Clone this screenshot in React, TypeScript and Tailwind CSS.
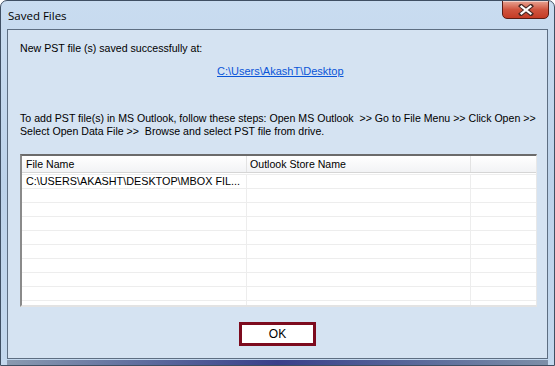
import React from "react";

const rows = Array.from({ length: 10 });

export default function App() {
  return (
    <div
      className="w-[555px] h-[366px] flex flex-col overflow-hidden rounded-t-[7px] border border-[#3f4f63] bg-gradient-to-b from-[#c9dcf0] via-[#bcd2ea] to-[#c3d8ee]"
      style={{ fontFamily: '"Liberation Sans", Arial, sans-serif' }}
    >
      {/* title bar */}
      <div className="h-[28px] flex items-start justify-between pl-[7px] pr-[5px] shrink-0">
        <div className="pt-[8px] text-[11.5px] leading-[14px] text-black" style={{ fontFamily: '"Open Sans", "Noto Sans", sans-serif' }}>
          Saved Files
        </div>
        <div className="w-[47px] h-[19px] -mt-px rounded-b-[5px] border border-[#5a1c14] bg-gradient-to-b from-[#e6a393] via-[#d0543f] to-[#c53b25] flex items-center justify-center shadow-[inset_0_1px_0_rgba(255,255,255,0.5)]">
          <svg width="16" height="12" viewBox="0 0 16 12">
            <path d="M3 2 L13 10 M13 2 L3 10" stroke="#4a2a26" strokeWidth="4.2" strokeLinecap="square" />
            <path d="M3.5 2.5 L12.5 9.5 M12.5 2.5 L3.5 9.5" stroke="#ffffff" strokeWidth="2.2" strokeLinecap="square" />
          </svg>
        </div>
      </div>

      {/* body */}
      <div className="mx-[6px] h-[330px] shrink-0 border border-[#5d6e82] bg-[#d5e3f2] flex flex-col text-[10.6px] leading-[13px] text-black">
        <div className="pl-[12px] mt-[12px]">New PST file (s) saved successfully at:</div>
        <div className="mt-[10px] pl-[209px] text-[11px]">
          <span className="text-[#0a55d8] underline">C:\Users\AkashT\Desktop</span>
        </div>
        <div className="mt-[34px] pl-[12px] pr-[8px]">
          <div className="whitespace-nowrap">To add PST file(s) in MS Outlook, follow these steps: Open MS Outlook&nbsp; &gt;&gt; Go to File Menu &gt;&gt; Click Open &gt;&gt;</div>
          <div className="whitespace-nowrap">Select Open Data File &gt;&gt;&nbsp; Browse and select PST file from drive.</div>
        </div>

        {/* table */}
        <div className="mt-[16px] ml-[12px] w-[517px] h-[153px] bg-white border-t-2 border-l-2 border-t-[#6b6b6b] border-l-[#8a8a8a] border-r border-b-2 border-r-[#e8e8e8] border-b-[#e3e3e3] overflow-hidden flex flex-col">
          <div className="h-[17px] shrink-0 flex bg-gradient-to-b from-white to-[#f2f3f5] border-b border-[#d5d5d5]">
            <div className="w-[225px] border-r border-[#e3e3e3] pl-[4px] leading-[17px]">File Name</div>
            <div className="w-[224px] border-r border-[#e3e3e3] pl-[3px] leading-[17px]">Outlook Store Name</div>
            <div className="flex-1" />
          </div>
          <div className="h-[2px] shrink-0 border-b border-[#eeeeee]" />
          {rows.map((_, i) => (
            <div key={i} className="h-[14px] shrink-0 flex border-b border-[#ededed]">
              <div className="w-[225px] border-r border-[#ededed] pl-[4px] text-[10.8px] leading-[13px] whitespace-nowrap">
                {i === 0 ? "C:\\USERS\\AKASHT\\DESKTOP\\MBOX FIL..." : ""}
              </div>
              <div className="w-[224px] border-r border-[#ededed]" />
              <div className="flex-1" />
            </div>
          ))}
        </div>

        <div className="mt-[15px] flex justify-center">
          <div className="w-[77px] h-[24px] border-[3px] border-[#7d0b1e] bg-white flex items-center justify-center text-[12px]">
            OK
          </div>
        </div>
      </div>

      {/* bottom strip */}
      <div className="flex-1 mx-[6px] mt-px bg-gradient-to-r from-[#8a9ab0] via-[#3a3f8a] to-[#7d8fa8]" />
    </div>
  );
}
